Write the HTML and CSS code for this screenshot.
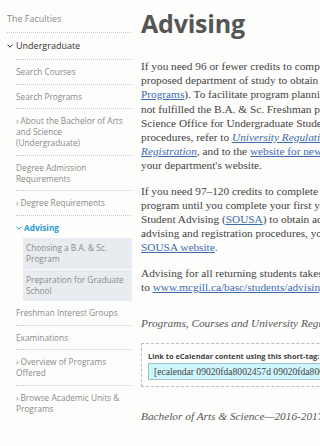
FILE: index.html
```html
<!DOCTYPE html>
<html>
<head>
<meta charset="utf-8" />
<title>Advising</title>
<link rel="stylesheet" href="styles.css">
</head>

<body>
<div class="page">
  <nav class="sidenav">
    <ul class="nav-top">
      <li class="top"><a href="#">The Faculties</a></li>
      <li class="top open">
        <a href="#"><svg class="chev" width="6" height="4" viewBox="0 0 6 4"><path d="M0.5 0.6 L3 3.2 L5.5 0.6" /></svg>Undergraduate</a>
        <ul class="nav-sub">
          <li><a href="#">Search Courses</a></li>
          <li><a href="#">Search Programs</a></li>
          <li><a href="#"><span class="arr">›</span>About the Bachelor of Arts and Science (Undergraduate)</a></li>
          <li><a href="#">Degree Admission Requirements</a></li>
          <li><a href="#"><span class="arr">›</span>Degree Requirements</a></li>
          <li class="current">
            <a href="#"><svg class="chev" width="6" height="4" viewBox="0 0 6 4"><path d="M0.5 0.6 L3 3.2 L5.5 0.6" /></svg>Advising</a>
            <ul class="nav-child">
              <li><a href="#">Choosing a B.A. &amp; Sc. Program</a></li>
              <li><a href="#">Preparation for Graduate School</a></li>
            </ul>
          </li>
          <li><a href="#">Freshman Interest Groups</a></li>
          <li><a href="#">Examinations</a></li>
          <li><a href="#"><span class="arr">›</span>Overview of Programs Offered</a></li>
          <li><a href="#"><span class="arr">›</span>Browse Academic Units &amp; Programs</a></li>
        </ul>
      </li>
    </ul>
  </nav>

  <main class="content">
    <h1>Advising</h1>

    <p>If you need 96 or fewer credits to complete your degree, you must consult an adviser in your<br>
    proposed department of study to obtain approval of your course selection (see <a href="#">Overview of</a><br>
    <a href="#">Programs</a>). To facilitate program planning, students who have not yet declared a major or who have<br>
    not fulfilled the B.A. &amp; Sc. Freshman program requirements should contact the Arts and<br>
    Science Office for Undergraduate Students. For more information on registration<br>
    procedures, refer to <a href="#"><em>University Regulations and Resources</em> &gt; <em>Undergraduate</em> &gt;</a><br>
    <a href="#"><em>Registration</em></a>, and to the <a href="#">website for new students</a> and<br>
    your department's website.</p>

    <p>If you need 97–120 credits to complete your degree, you are considered to be in the Freshman<br>
    program until you complete your first year. Consult the Science Office for Undergraduate<br>
    Student Advising (<a href="#">SOUSA</a>) to obtain advice on course selection. For more information on<br>
    advising and registration procedures, you should refer to the<br>
    <a href="#">SOUSA website</a>.</p>

    <p>Advising for all returning students takes place in your department. For more information, go<br>
    to <a href="#">www.mcgill.ca/basc/students/advising</a>.</p>

    <p class="crumb first">Programs, Courses and University Regulations—2016-2017 (last updated Mar. 11, 2016)</p>

    <div class="shortcode">
      <div class="shortcode-label">Link to eCalendar content using this short-tag:</div>
      <div class="shortcode-field">[ecalendar 09020fda8002457d 09020fda8002457e]</div>
    </div>

    <p class="crumb">Bachelor of Arts &amp; Science—2016-2017 (last updated Mar. 11, 2016)</p>
  </main>
</div>
</body>
</html>
```

FILE: styles.css
```css
/* page */
html, body {margin: 0; padding: 0; background: #fdfdfc;}
body {width: 320px; height: 446px; overflow: hidden;}
.page {display: flex; width: 900px; align-items: flex-start;}
a {text-decoration: none;}
ul {list-style: none; margin: 0; padding: 0;}

/* left menu */
.sidenav {width: 125px; flex: none; padding: 6px 0 0 7px; font-family: "Open Sans", "Noto Sans", sans-serif;}
.sidenav .top > a {display: block; padding: 7px 0 7px; line-height: 12px; font-size: 9px; color: #8a8a8a;}
.sidenav .top {border-bottom: 1px dotted #c8c8c8;}
.sidenav .top.open {border-bottom: 0;}
.sidenav .top.open > a {color: #333;}
.sidenav .chev {width: 6px; height: 4px; margin: 0 3px 1px 0; vertical-align: middle;}
.sidenav .chev path {fill: none; stroke: currentColor; stroke-width: 1;}

.nav-sub {margin-left: 9px;}
.nav-sub > li {border-top: 1px dotted #c8c8c8;}
.nav-sub > li.current + li {border-top: 0;}
.nav-sub > li > a {display: block; padding: 6px 4px 6.6px 0; line-height: 11px; font-size: 8.3px; color: #8a8a8a;}
.nav-sub .arr {margin-right: 2px;}
.nav-sub .current > a {padding-bottom: 5px; color: #2b9bd8; font-weight: bold;}
.nav-sub .current .chev {margin-right: 2px;}

.nav-child {margin-left: 7px; padding-left: 3px; background: #e8ecf0;}
.nav-child li + li {border-top: 1px solid #fbfcfd;}
.nav-child a {display: block; padding: 4px 4px 5px 0; line-height: 11px; font-size: 8.3px; color: #8a8a8a;}

/* main column */
.content {margin-left: 9px; font-family: "Liberation Serif", "Times New Roman", serif; color: #444;}
.content h1 {margin: 6px 0 19px; font-family: "Open Sans", "Noto Sans", sans-serif; font-size: 25px; line-height: 34px; font-weight: bold; color: #555; letter-spacing: -0.2px;}
.content p {margin: 0 0 11px; font-size: 11.3px; line-height: 14.2px; white-space: nowrap;}
.content p a {color: #3b6cb0; text-decoration: underline;}
.content p.crumb {margin: 22px 0; font-style: italic; color: #555;}
.content p.crumb.first {margin-bottom: 13px;}

.shortcode {width: 420px; padding: 6.5px 6px 6px; border: 1px dashed #bdbdbd;}
.shortcode-label {font-family: "Open Sans", "Noto Sans", sans-serif; font-size: 7.4px; line-height: 11px; font-weight: bold; color: #444; white-space: nowrap;}
.shortcode-field {margin-top: 1.5px; padding: 0 5px; height: 15px; line-height: 15px; font-size: 9.6px; white-space: nowrap; color: #444; background: #cff6fc; border: 1px solid #9ec3cc;}
```
